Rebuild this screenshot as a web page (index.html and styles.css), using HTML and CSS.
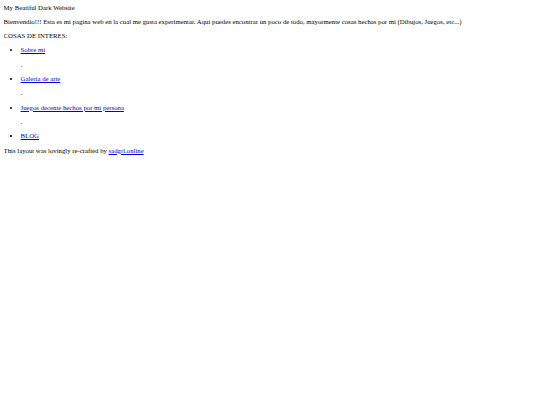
FILE: index.html
```html
<!DOCTYPE html>
<html>
<head>
<meta charset="utf-8">
<link rel="stylesheet" href="styles.css">
</head>
<body>
<div class="title">My Beatiful Dark Website</div>
<p>Bienvendio!!! Esta es mi pagina web en la cual me gusta experimentar. Aqui puedes encontrar un poco de todo, mayormente cosas hechas por mi (Dibujos, Juegos, etc...)</p>
<p>COSAS DE INTERES:</p>
<ul>
<li><a href="#">Sobre mi</a><p>.</p></li>
<li><a href="#">Galeria de arte</a><p>.</p></li>
<li><a href="#">Juegos decente hechos por mi persona</a><p>.</p></li>
<li><a href="#">BLOG</a></li>
</ul>
<p>This layout was lovingly re-crafted by <a href="#">sadgrl.online</a></p>
</body>
</html>
```
FILE: styles.css
```css
html { background: #fff; }
body {
  margin: 3.6px 3.6px;
  font-family: "Liberation Serif", "Times New Roman", serif;
  font-size: 6.75px;
  line-height: 8px;
  color: #000;
}
p { margin: 6.3px 0; }
ul { margin: 6.3px 0; padding-left: 17px; }
li p { margin: 6.3px 0; }
a { color: #0000ee; text-decoration: underline; }
```
